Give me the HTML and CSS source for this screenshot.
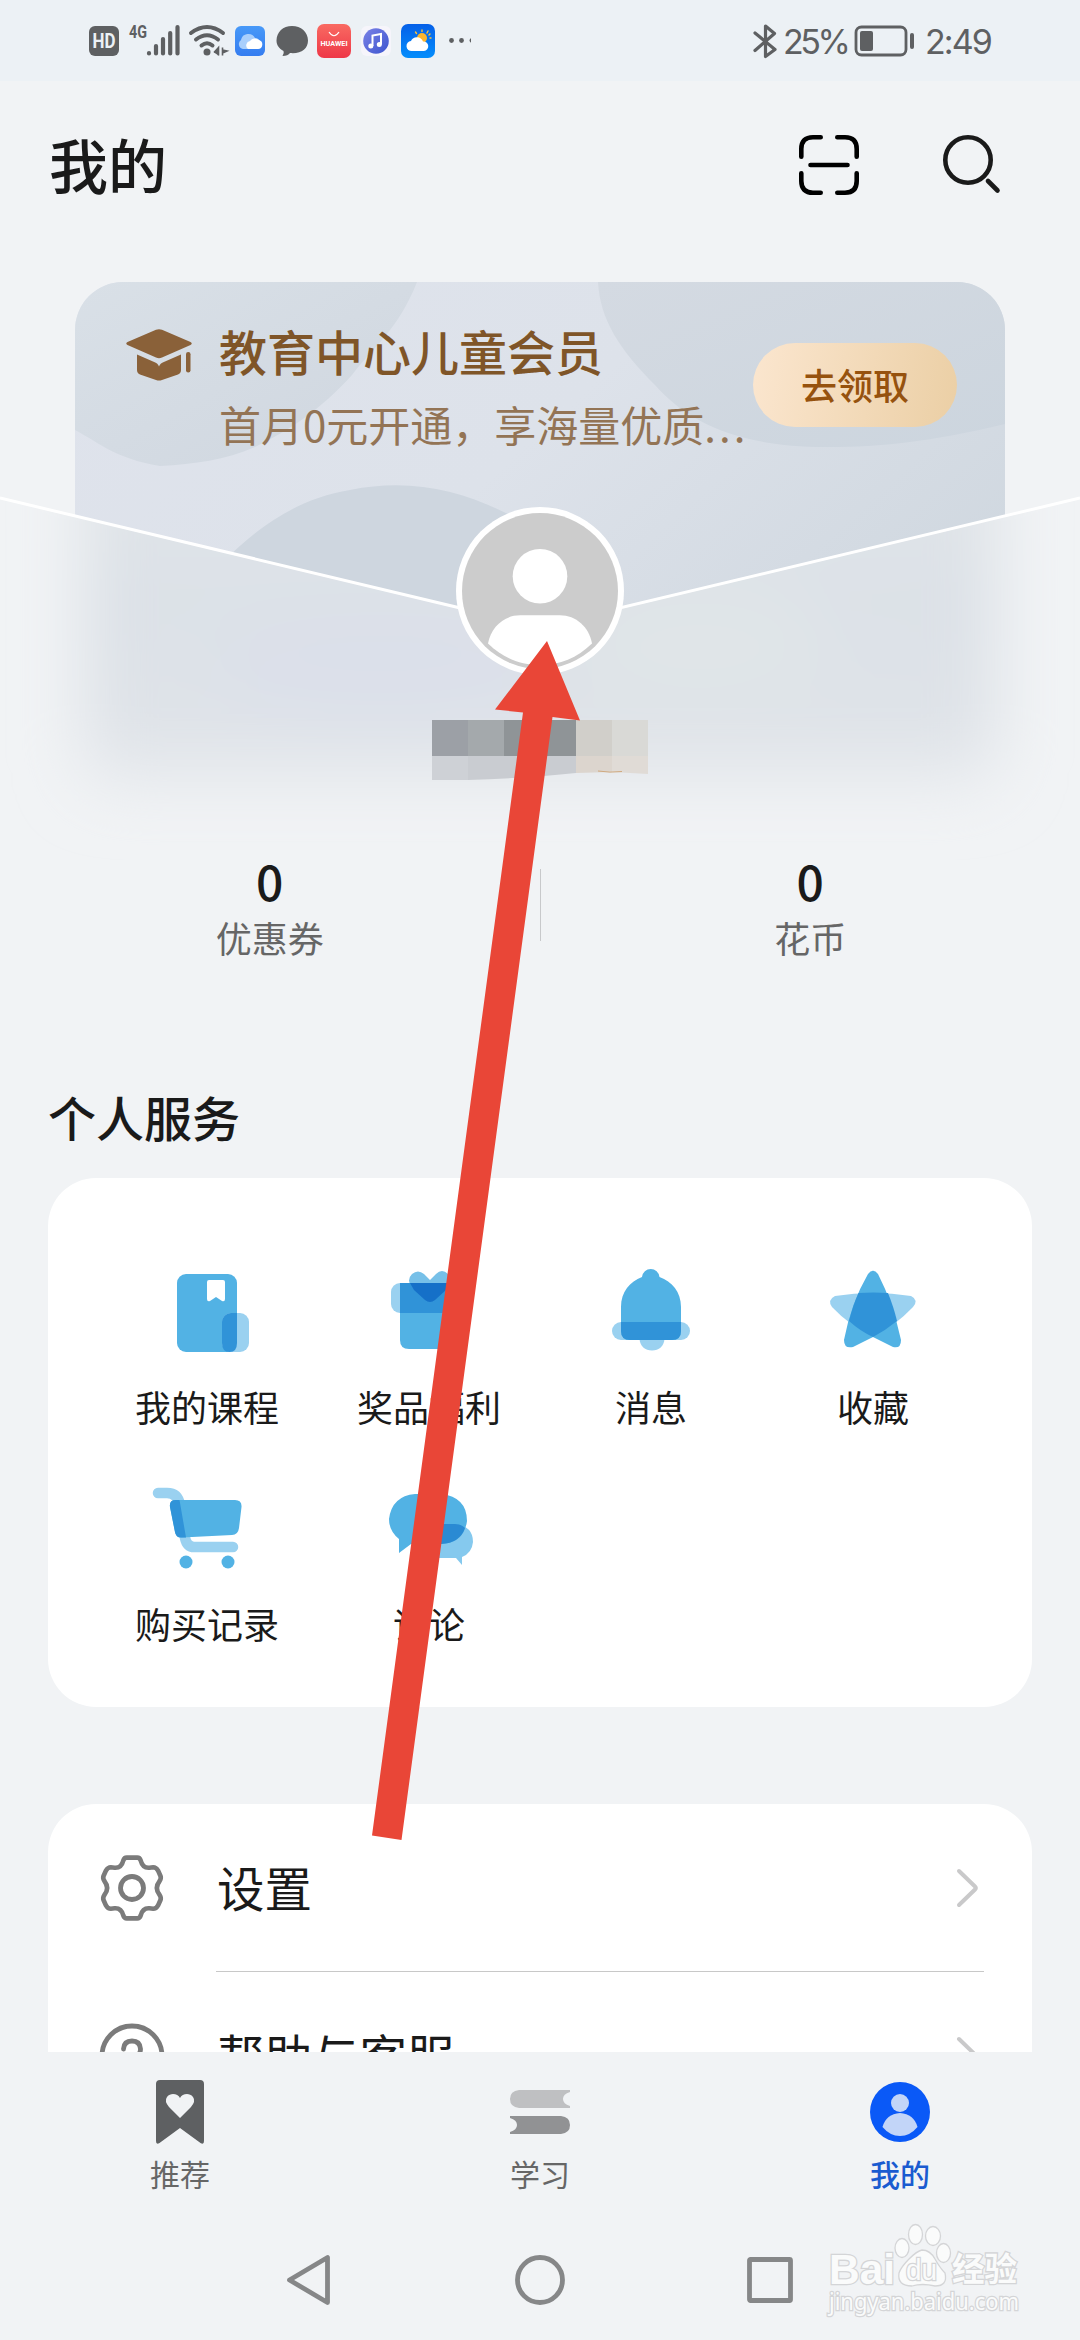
FILE: index.html
```
<!DOCTYPE html>
<html lang="zh-CN">
<head>
<meta charset="utf-8">
<title>我的</title>
<link rel="stylesheet" href="styles.css">
</head>
<body>
<div class="screen">
  <div class="status">
    <svg class="status-icons" width="400" height="81" viewBox="80 0 400 81">
      <defs>
        <linearGradient id="gCloud" x1="0" y1="0" x2="0" y2="1"><stop offset="0" stop-color="#4799f8"/><stop offset="1" stop-color="#357df0"/></linearGradient>
        <linearGradient id="gRed" x1="0" y1="0" x2="0" y2="1"><stop offset="0" stop-color="#f96a62"/><stop offset="1" stop-color="#ee3747"/></linearGradient>
        <linearGradient id="gSky" x1="0" y1="0" x2="0" y2="1"><stop offset="0" stop-color="#0560e8"/><stop offset="1" stop-color="#058efc"/></linearGradient>
        <linearGradient id="gMusic" x1="0" y1="0" x2="1" y2="1"><stop offset="0" stop-color="#7b82e6"/><stop offset="1" stop-color="#3c55cf"/></linearGradient>
      </defs>
      <rect x="89" y="26" width="30" height="30" rx="6" fill="#5e6062"/>
      <text x="104" y="48" class="t-hd" textLength="23" lengthAdjust="spacingAndGlyphs">HD</text>
      <text x="129" y="38" class="t-4g" textLength="18" lengthAdjust="spacingAndGlyphs">4G</text>
      <g stroke="#5e6062" stroke-width="4.200" stroke-linecap="round">
        <path d="M149 53V53.500M156 46V53.500M163 39V53.500M170.200 33V53.500M177.500 27V53.500"/>
      </g>
      <g fill="none" stroke="#5e6062" stroke-width="4" stroke-linecap="round">
        <path d="M191 33Q207 21 223 33M196 39.500Q207 31 218 39.500M201.500 45.500Q207 41 212.500 45.500"/>
      </g>
      <circle cx="207" cy="52" r="3.500" fill="#5e6062"/>
      <path d="M214 52.500L218.500 47.500V55.500M222.500 47.500V55.500M222.500 50L227 51L222.500 53" fill="#5e6062" stroke="#5e6062" stroke-width="1.600"/>
      <rect x="235" y="26" width="30" height="30" rx="6" fill="url(#gCloud)"/>
      <path d="M243 49A5 5 0 0 1 241 40A7.500 7.500 0 0 1 255 38A6 6 0 0 1 258 49Z" fill="#a9cffc"/>
      <path d="M248 49A4.500 4.500 0 0 1 250 41A6 6 0 0 1 259 40A4.600 4.600 0 0 1 258 49Z" fill="#fff"/>
      <path d="M292 26C301 26 308 32 308 40.500S301 54 290 53Q288 56 282.500 56Q284.500 53 283.500 51C279 48.500 276.500 45 276.500 40.500C276.500 32 283 26 292 26Z" fill="#5e6062"/>
      <rect x="317" y="24" width="34" height="34" rx="7" fill="url(#gRed)"/>
      <path d="M329 32Q334 39.500 339 32" fill="none" stroke="#fff" stroke-width="1.200"/>
      <text x="334" y="46" class="t-hw" textLength="27" lengthAdjust="spacingAndGlyphs">HUAWEI</text>
      <rect x="361" y="26" width="30" height="30" rx="6" fill="#f6f5fb"/>
      <circle cx="376" cy="41" r="12.800" fill="url(#gMusic)"/>
      <path d="M372.500 46V35.500L381 34V44.500" fill="none" stroke="#fff" stroke-width="2"/>
      <circle cx="370.800" cy="46" r="2.500" fill="#fff"/><circle cx="379.300" cy="44.500" r="2.500" fill="#fff"/>
      <rect x="401" y="24" width="34" height="34" rx="7" fill="url(#gSky)"/>
      <g stroke="#fbc23b" stroke-width="1.400" stroke-linecap="round"><path d="M422 30V31.500M415.500 32L416.500 33.500M428 31L427 33M430 38H431M430 34L429 35"/></g>
      <circle cx="422" cy="38" r="5" fill="#fcb52c"/>
      <path d="M412 51A5 5 0 0 1 411 41A6.500 6.500 0 0 1 423 41.500A4.700 4.700 0 0 1 424 51Z" fill="#fff"/>
      <circle cx="451.500" cy="40.500" r="2.400" fill="#5e6062"/><circle cx="461.500" cy="40.500" r="2.400" fill="#5e6062"/><path d="M471 38.300A2.400 2.400 0 0 0 471 42.700Z" fill="#5e6062"/>
    </svg>
    <div class="status-right">
      <svg width="24" height="36" viewBox="0 0 24 36"><path d="M2 10L22 26.500L12.500 33.500V3L21.500 10.500L2 27.500" fill="none" stroke="#5e6062" stroke-width="3.200" stroke-linecap="round" stroke-linejoin="round"/></svg>
      <span class="pct">25%</span>
      <svg class="batt" width="62" height="34" viewBox="0 0 62 34"><rect x="2" y="3" width="50" height="28" rx="5.500" fill="none" stroke="#5e6062" stroke-width="2.800"/><rect x="6" y="7" width="13" height="20" rx="2" fill="#5e6062"/><rect x="56" y="9" width="4" height="16" rx="2" fill="#5e6062"/></svg>
      <span class="clock">2:49</span>
    </div>
  </div>

  <header class="top">
    <h1>我的</h1>
    <svg class="scan" width="60" height="60" viewBox="0 0 60 60" fill="none" stroke="#000" stroke-width="4.600" stroke-linecap="round"><path d="M2.300 21.700V14Q2.300 2.300 14 2.300H21.700M38.300 2.300H46Q57.700 2.300 57.700 14V21.700M57.700 38.300V46Q57.700 57.700 46 57.700H38.300M21.700 57.700H14Q2.300 57.700 2.300 46V38.300M11.500 30H48.500"/></svg>
    <svg class="search" width="60" height="60" viewBox="0 0 60 60" fill="none" stroke="#1a1a1a" stroke-width="4.600"><circle cx="26" cy="25" r="22.700"/><path d="M46 46L55.500 55.500" stroke-linecap="round"/></svg>
  </header>

  <section class="hero">
    <svg class="hero-bg" width="1080" height="600" viewBox="0 260 1080 600">
      <defs>
        <linearGradient id="gCard" x1="0" y1="0" x2="1" y2="0.600"><stop offset="0" stop-color="#dfe3ec"/><stop offset="0.500" stop-color="#dde2ea"/><stop offset="1" stop-color="#cfd7df"/></linearGradient>
        <linearGradient id="gBlobA" x1="0" y1="0" x2="1" y2="1"><stop offset="0" stop-color="#d9e0e7"/><stop offset="1" stop-color="#cfd6df"/></linearGradient>
        <linearGradient id="gBlobB" x1="0" y1="0" x2="1" y2="1"><stop offset="0" stop-color="#d4dae2"/><stop offset="1" stop-color="#ccd5de"/></linearGradient>
        <linearGradient id="gFrost" x1="0" y1="0" x2="0" y2="1"><stop offset="0" stop-color="#e2e6e9"/><stop offset="0.450" stop-color="#dce1e7"/><stop offset="0.850" stop-color="#dfe3e8"/><stop offset="1" stop-color="#e7eaee"/></linearGradient>
        <clipPath id="cCard"><rect x="75" y="282" width="930" height="500" rx="48"/></clipPath>
        <clipPath id="cFlap"><path d="M0 499L540 628L1080 499V860H0Z"/></clipPath>
        <filter id="fBlur" x="-20%" y="-30%" width="140%" height="160%"><feGaussianBlur stdDeviation="32"/></filter>
      </defs>
      <g clip-path="url(#cCard)">
        <rect x="75" y="282" width="930" height="500" fill="url(#gCard)"/>
        <path d="M75 282H417C398 330 375 345 352 375C320 410 290 430 255 447C225 460 195 464 160 466C115 459 95 440 75 430Z" fill="url(#gBlobA)"/>
        <path d="M598 282H1005V424C930 442 880 447 830 447C745 448 690 425 655 385C620 350 600 320 598 282Z" fill="url(#gBlobB)"/>
        <path d="M225 560C260 525 300 498 350 490C410 478 460 490 510 515V660H400Z" fill="#ced6df"/>
      </g>
      <g clip-path="url(#cFlap)">
        <rect x="0" y="490" width="1080" height="370" fill="#f1f3f5"/>
        <g filter="url(#fBlur)">
          <rect x="82" y="440" width="916" height="345" rx="30" fill="url(#gFrost)"/>
          <ellipse cx="380" cy="670" rx="170" ry="50" fill="#dbe0ea"/>
          <ellipse cx="700" cy="640" rx="130" ry="60" fill="#e0e5e8"/>
        </g>
      </g>
      <path d="M0 498L540 627L1080 498" fill="none" stroke="#fff" stroke-width="3"/>
      <g>
        <path d="M432 720H468V756H432Z" fill="#9ca0a6"/><path d="M468 720H504V756H468Z" fill="#a4a9ac"/><path d="M504 720H576V756H504Z" fill="#8f9497"/>
        <path d="M576 720H612V756H576Z" fill="#d1cfca"/><path d="M612 720H648V756H612Z" fill="#d9d9d6"/>
        <path d="M432 756H468V780H432Z" fill="#ced1d6"/><path d="M468 756H576V773Q530 778 468 780Z" fill="#c9ccd1"/>
        <path d="M576 756H612V772L576 773Z" fill="#dcd5ce"/><path d="M612 756H648V774L612 772Z" fill="#e0dbd6"/>
        <path d="M598 771Q610 773 622 771.500" stroke="#d0aa80" fill="none"/>
      </g>
      <circle cx="540" cy="591" r="84" fill="#fff"/><circle cx="540" cy="591" r="78" fill="#ccc"/>
      <circle cx="540" cy="576.300" r="27.300" fill="#fff"/>
      <path d="M488 643.500C491 627 504 615.300 520 615.300H560C576 615.300 589 627 592 643.500C577 658 560 665 540 665S503 658 488 643.500Z" fill="#fff"/>
    </svg>
    <div class="promo">
      <svg class="cap" width="66" height="52" viewBox="0 0 66 52" fill="#8a6139"><path d="M30 .8Q33 -.5 36 .8L64.500 13Q67 14.500 64.500 16L36 28.500Q33 29.800 30 28.500L1.500 16Q-1 14.500 1.500 13Z"/><path d="M11 25.500L27 32.500Q32 34 33 37.500Q34 34 39 32.500L55 25.500V41Q55 44 52 45.500L36 51Q33 52 30 51L14 45.500Q11 44 11 41Z"/><rect x="60" y="23" width="4.500" height="20.500" rx="2.200"/></svg>
      <div class="promo-text">
        <div class="promo-title">教育中心儿童会员</div>
        <div class="promo-sub">首月0元开通，享海量优质<span class="dots">...</span></div>
      </div>
      <div class="claim">去领取</div>
    </div>
  </section>

  <section class="stats">
    <div class="stat"><b>0</b><span>优惠券</span></div>
    <i class="bar"></i>
    <div class="stat"><b>0</b><span>花币</span></div>
  </section>

  <h2>个人服务</h2>
  <section class="card services">
    <div class="svc"><svg width="90" height="90" viewBox="0 0 90 90"><rect x="15" y="6" width="60" height="78" rx="9" fill="#52b2e4"/><path d="M60 54A9 9 0 0 1 69 45H78A9 9 0 0 1 87 54V75A9 9 0 0 1 78 84H69A9 9 0 0 1 60 75Z" fill="#9ad1f0"/><path d="M60 54A9 9 0 0 1 69 45H75V75Q75 84 67.500 84T60 75Z" fill="#3093d8"/><path d="M47 12H61Q63 12 63 14V31Q63 34 60 33L54 29L48 33Q45 34 45 31V14Q45 12 47 12Z" fill="#fff"/></svg><span>我的课程</span></div>
    <div class="svc"><svg width="90" height="90" viewBox="0 0 90 90"><rect x="7" y="15" width="78" height="30" rx="9" fill="#9ad1f0"/><path d="M46 12L40 6Q34 1 28 6Q22 12 28 20L41 31Q46 36 51 31L64 20Q70 12 64 6T52 6Z" fill="#77c0e8"/><path d="M16 15H76V72Q76 81 67 81H25Q16 81 16 72Z" fill="#52b2e4"/><path d="M16 15H76V45H16Z" fill="#3093d8"/><path d="M26 15H66Q65 19 62 22L51 32Q46 36 41 32L30 22Z" fill="#1570c8"/></svg><span>奖品福利</span></div>
    <div class="svc"><svg width="90" height="90" viewBox="0 0 90 90"><path d="M33.500 71H58.500C58 78 53 82.500 46 82.500S34 78 33.500 71Z" fill="#9ad1f0"/><rect x="6" y="54" width="78" height="18" rx="9" fill="#9ad1f0"/><path d="M36 9A8.800 9 0 0 1 53.500 9C66 13.500 75 24 75 39V63Q75 72 66 72H24Q15 72 15 63V39C15 24 24 13.500 36 9Z" fill="#52b2e4"/><path d="M15 54H75V63Q75 72 66 72H24Q15 72 15 63Z" fill="#3093d8"/></svg><span>消息</span></div>
    <div class="svc"><svg width="90" height="90" viewBox="0 0 90 90"><path d="M7 28Q45 22 83 28Q91 32 85 39Q67 58 45 69Q22 58 4 39Q-1 32 7 28Z" fill="#9ad1f0"/><path d="M40 6Q45 -.5 50 6Q65 35 73 72Q73 81 65 79L45 69L25 79Q16 81 16 72Q23 35 40 6Z" fill="#52b2e4"/><path d="M30.500 25Q45 24 60 25Q66 40 69 53Q58 62 45 69Q32 63 21 53Q25 37 30.500 25Z" fill="#3093d8"/></svg><span>收藏</span></div>
    <div class="svc"><svg width="90" height="90" viewBox="0 0 90 90"><path d="M-4 8H5Q16 8 18 20L23 53Q25 62 32 62H71" fill="none" stroke="#9ad1f0" stroke-width="10.500" stroke-linecap="round"/><path d="M14 15H73Q80 15 79.500 22L77 43Q76 50 70 50L20 52.500Q14 53 13 47L8 22Q7 15 14 15Z" fill="#52b2e4"/><path d="M14 15H17.500L24 52.500H20Q14 53 13 47L8 22Q7 15 14 15Z" fill="#3093d8"/><circle cx="24" cy="77" r="6.500" fill="#52b2e4"/><circle cx="66" cy="77" r="6.500" fill="#52b2e4"/></svg><span>购买记录</span></div>
    <div class="svc"><svg width="90" height="90" viewBox="0 0 90 90"><path d="M54 39H71Q89 41 89 57Q88 68 78 72V80L72 73H54Q38 70 38 56T54 39Z" fill="#85c9ee"/><path d="M31 9H57Q83 12 83 36Q80 58 57 59H27L15 68V54Q5 46 5 34Q8 11 31 9Z" fill="#52b2e4"/><path d="M54 39H71Q77 39 81 43Q76 58 57 59H38Q37 42 54 39Z" fill="#2a8ad3"/></svg><span>评论</span></div>
  </section>

  <section class="card list">
    <div class="row">
      <svg class="row-icon" width="66" height="68" viewBox="-33 -34 66 68" fill="none" stroke="#7b7b7b" stroke-width="4.800"><circle r="11.500"/><path transform="scale(.965)" d="M-5.500 -31.500H5.500Q8 -31.500 9 -28.500Q11 -20.500 18 -21L22 -21.500Q25 -21.500 27 -18L29.500 -12.500Q30.500 -10 28.500 -7Q23 0 28.500 7Q30.500 10 29.500 12.500L27 18Q25 21.500 22 21.500L18 21Q11 20.500 9 28.500Q8 31.500 5.500 31.500H-5.500Q-8 31.500 -9 28.500Q-11 20.500 -18 21L-22 21.500Q-25 21.500 -27 18L-29.500 12.500Q-30.500 10 -28.500 7Q-23 0 -28.500 -7Q-30.500 -10 -29.500 -12.500L-27 -18Q-25 -21.500 -22 -21.500L-18 -21Q-11 -20.500 -9 -28.500Q-8 -31.500 -5.500 -31.500Z"/></svg>
      <span>设置</span>
      <svg class="chev" width="24" height="40" viewBox="0 0 24 40" fill="none" stroke="#c9c9ca" stroke-width="4" stroke-linecap="round" stroke-linejoin="round"><path d="M3 3L19 18.500Q20.500 20 19 21.500L3 37"/></svg>
    </div>
    <div class="row">
      <svg class="row-icon" width="66" height="68" viewBox="-33 -34 66 68" fill="none" stroke="#7b7b7b" stroke-width="4.800" stroke-linecap="round"><circle r="30"/><path d="M-8.500 -7Q-8 -15 0 -15T8.500 -7Q8.500 -2 4 1Q0 4 0 8M0 16V17"/></svg>
      <span>帮助与客服</span>
      <svg class="chev" width="24" height="40" viewBox="0 0 24 40" fill="none" stroke="#c9c9ca" stroke-width="4" stroke-linecap="round" stroke-linejoin="round"><path d="M3 3L19 18.500Q20.500 20 19 21.500L3 37"/></svg>
    </div>
  </section>

  <nav class="tabs">
    <div class="tab"><svg width="66" height="66" viewBox="0 0 66 66"><path d="M13 1H53Q57 1 57 5V62Q57 66 53.500 64L33 49L12.500 64Q9 66 9 62V5Q9 1 13 1Z" fill="#5e6062"/><path d="M33 39L22 28Q17 22 20 18C24 13 31 15 33 19C35 15 42 13 46 18Q49 22 44 28Z" fill="#f1f3f5"/></svg><span>推荐</span></div>
    <div class="tab"><svg width="66" height="66" viewBox="0 0 66 66"><path d="M12 11H63V13Q56 15 56 20T63 27V29H12Q3 28 3 20T12 11Z" fill="#bfc0c2"/><path d="M3 37H54Q63 38 63 46T54 55H3V53Q10 51 10 46T3 39Z" fill="#919294"/></svg><span>学习</span></div>
    <div class="tab on"><svg width="66" height="66" viewBox="0 0 66 66"><circle cx="33" cy="33" r="30" fill="#0a59f7"/><circle cx="33" cy="24" r="9" fill="#c2d5f8"/><path d="M33 34Q47 35 50.500 48Q43 57 33 57T15.500 48Q19 35 33 34Z" fill="#c2d5f8"/></svg><span>我的</span></div>
  </nav>

  <div class="sys">
    <svg width="60" height="60" viewBox="0 0 60 60"><path d="M47.500 7.500V52.500L9.500 30Z"/></svg>
    <svg width="60" height="60" viewBox="0 0 60 60"><circle cx="30" cy="30" r="22.500"/></svg>
    <svg width="60" height="60" viewBox="0 0 60 60"><rect x="9.500" y="9.500" width="41" height="41" rx="1"/></svg>
  </div>

  <svg class="watermark" width="200" height="100" viewBox="0 0 200 100">
    <g class="wm"><text x="1" y="59" class="wm-a" textLength="66" lengthAdjust="spacingAndGlyphs">Bai</text>
    <ellipse cx="74" cy="23" rx="7" ry="9.500"/><ellipse cx="87.500" cy="9.500" rx="7" ry="10"/><ellipse cx="105" cy="11" rx="7.500" ry="9.500"/><ellipse cx="115.500" cy="28" rx="7" ry="9.500"/>
    <path d="M94 25Q102 25 107 34T117 48Q120 61 107 61Q94 58 84 61Q69 61 71 48Q73 42 81 34T94 25Z"/>
    <text x="78" y="55" class="wm-d" textLength="31" lengthAdjust="spacingAndGlyphs">du</text>
    <text x="124" y="56" class="wm-c" textLength="65" lengthAdjust="spacingAndGlyphs">经验</text>
    <text x="1" y="85" class="wm-e" textLength="190" lengthAdjust="spacingAndGlyphs">jingyan.baidu.com</text></g>
  </svg>
  <svg class="arrow" width="240" height="1210" viewBox="360 635 240 1210"><path d="M547 641L580 720.500L552.500 717L401.500 1840L372 1835.500L523 712.500L495 709.500Z" fill="#e94637"/></svg>
</div>
</body>
</html>
```
FILE: styles.css
```
* { box-sizing: border-box; }
body { margin: 0; background: #f1f3f5; font-family: "Noto Sans CJK SC", sans-serif; color: #1a1a1a; }
.screen { position: relative; width: 1080px; height: 2340px; overflow: hidden; display: flex; flex-direction: column; }
.screen > * { flex-shrink: 0; }
svg { display: block; flex-shrink: 0; }

.status { height: 81px; background: #ecf1f5; display: flex; justify-content: space-between; padding: 0 88px 0 80px; }
.t-hd { font: 700 20px Roboto, sans-serif; fill: #ecf1f5; text-anchor: middle; }
.t-4g { font: 700 19px Roboto, sans-serif; fill: #5e6062; }
.t-hw { font: 700 7.500px Roboto, sans-serif; fill: #fff; text-anchor: middle; }
.status-right { display: flex; align-items: center; color: #5e6062; font: 400 34px/40px Inter, sans-serif; }
.pct { width: 66px; margin: 2px 0 0 6px; letter-spacing: -3.400px; white-space: nowrap; }
.batt { margin: 0 0 0 5px; }
.clock { width: 67px; margin: 2px 0 0 9px; letter-spacing: -1.900px; white-space: nowrap; }

.top { height: 179px; display: flex; align-items: center; padding: 0 78px 0 49px; }
h1 { margin: 0 auto 14px 0; font-size: 59px; font-weight: 500; line-height: 70px; }
.scan { margin-bottom: 12px; }
.search { margin: 0 0 11px 83px; }

.hero { height: 600px; margin-bottom: -4px; display: grid; }
.hero-bg, .promo { grid-area: 1 / 1; }
.promo { position: relative; display: flex; align-items: flex-start; padding: 58px 123px 0 126px; }
.cap { margin: 11px 27px 0 0; }
.promo-text { flex: 1; white-space: nowrap; }
.promo-title { font-size: 48px; font-weight: 500; line-height: 64px; color: #7f5528; }
.promo-sub { margin-top: 12px; font-size: 42px; line-height: 60px; color: #937455; }
.dots { letter-spacing: 3px; }
.claim { width: 204px; height: 84px; margin-top: 25px; border-radius: 42px; background: linear-gradient(100deg, #fbe6cf, #ebcfa5); color: #96520e; font-size: 36px; font-weight: 500; line-height: 83px; text-align: center; }

.stats { height: 216px; display: flex; align-items: flex-start; }
.stat { flex: 1; display: flex; flex-direction: column; align-items: center; }
.stat b { font-size: 48px; font-weight: 500; line-height: 48px; }
.stat span { margin-top: 11px; font-size: 36px; line-height: 44px; color: #666; }
.bar { width: 1px; height: 72px; margin-top: 13px; background: #c8c9cb; }
h2 { margin: 0; height: 106px; padding: 9px 0 0 48px; font-size: 48px; font-weight: 500; line-height: 70px; }

.card { margin: 0 48px; background: #fff; border-radius: 48px; }
.services { height: 529px; padding: 90px 48px 0; display: grid; grid-template-columns: repeat(4, 222px); grid-auto-rows: 217px; }
.svc { display: flex; flex-direction: column; align-items: center; font-size: 36px; line-height: 44px; }
.svc svg { overflow: visible; margin-bottom: 26px; }

.list { height: 248px; margin-top: 97px; padding: 0 48px; border-radius: 48px 48px 0 0; overflow: hidden; }
.row { position: relative; height: 168px; display: flex; align-items: center; font-size: 47.500px; line-height: 60px; }
.row > span { margin-bottom: 3px; }
.row-icon { margin: 0 52px 0 3px; }
.row + .row::before { content: ""; position: absolute; left: 120px; right: 0; top: -1px; height: 1px; background: #c8c8c8; }
.chev { margin-left: auto; margin-right: 4px; }

.tabs { height: 168px; display: flex; padding-top: 27px; }
.tab { flex: 1; display: flex; flex-direction: column; align-items: center; font-size: 30px; line-height: 36px; color: #666; }
.tab span { margin-top: 10px; }
.tab.on { color: #1a5bd0; font-weight: 500; }

.sys { height: 120px; display: flex; justify-content: center; align-items: center; gap: 170px; }
.sys path, .sys circle, .sys rect { fill: none; stroke: #868788; stroke-width: 4.800; stroke-linejoin: round; }

.watermark { position: absolute; left: 828px; top: 2225px; overflow: visible; }
.wm { fill: #fafbfb; stroke: #d4d5d7; stroke-width: 1.300; }
.wm text { paint-order: stroke; stroke-width: 2.600; }
.wm-a { font: 700 43px "Liberation Sans", sans-serif; }
.wm-d { font: 400 30px "Liberation Sans", sans-serif; }
.wm-c { font: 700 33px "Noto Sans CJK SC", sans-serif; }
.wm-e { font: 400 23px "Noto Sans", sans-serif; }
.arrow { position: absolute; left: 360px; top: 635px; }
```
